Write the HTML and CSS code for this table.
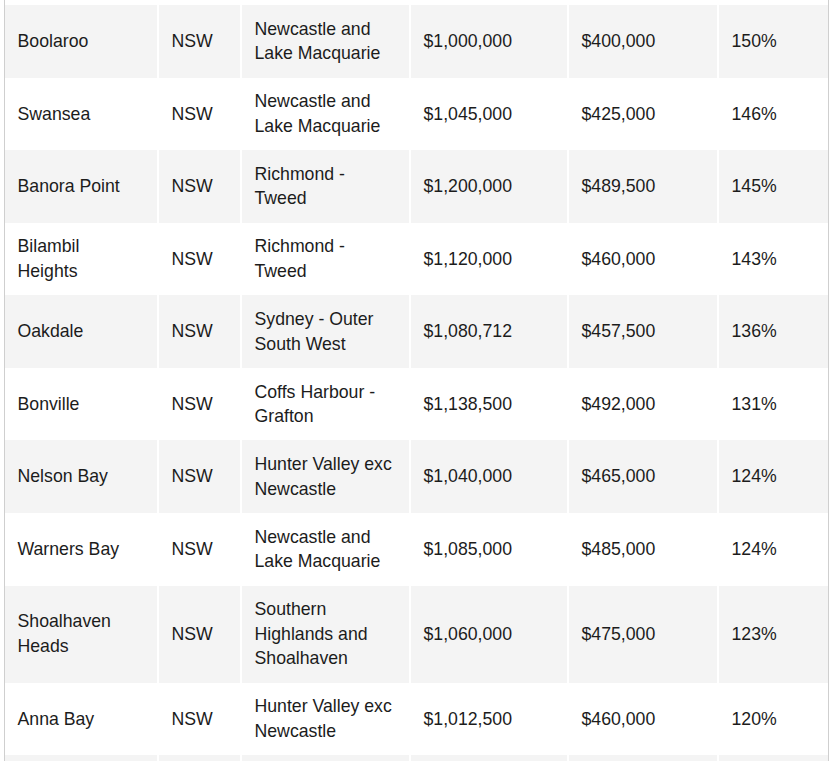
FILE: index.html
```html
<!DOCTYPE html>
<html lang="en">
<head>
<meta charset="utf-8">
<title>Suburbs</title>
<link rel="stylesheet" href="styles.css">
</head>
<body>
<div class="frame">
  <table class="data">
    <colgroup>
      <col class="c-suburb">
      <col class="c-state">
      <col class="c-region">
      <col class="c-price">
      <col class="c-income">
      <col class="c-pct">
    </colgroup>
    <tbody>
      <tr><td>Boolaroo</td><td>NSW</td><td>Newcastle and<br>Lake Macquarie</td><td>$1,000,000</td><td>$400,000</td><td>150%</td></tr>
      <tr><td>Swansea</td><td>NSW</td><td>Newcastle and<br>Lake Macquarie</td><td>$1,045,000</td><td>$425,000</td><td>146%</td></tr>
      <tr><td>Banora Point</td><td>NSW</td><td>Richmond -<br>Tweed</td><td>$1,200,000</td><td>$489,500</td><td>145%</td></tr>
      <tr><td>Bilambil<br>Heights</td><td>NSW</td><td>Richmond -<br>Tweed</td><td>$1,120,000</td><td>$460,000</td><td>143%</td></tr>
      <tr><td>Oakdale</td><td>NSW</td><td>Sydney - Outer<br>South West</td><td>$1,080,712</td><td>$457,500</td><td>136%</td></tr>
      <tr><td>Bonville</td><td>NSW</td><td>Coffs Harbour -<br>Grafton</td><td>$1,138,500</td><td>$492,000</td><td>131%</td></tr>
      <tr><td>Nelson Bay</td><td>NSW</td><td>Hunter Valley exc<br>Newcastle</td><td>$1,040,000</td><td>$465,000</td><td>124%</td></tr>
      <tr><td>Warners Bay</td><td>NSW</td><td>Newcastle and<br>Lake Macquarie</td><td>$1,085,000</td><td>$485,000</td><td>124%</td></tr>
      <tr><td>Shoalhaven<br>Heads</td><td>NSW</td><td>Southern<br>Highlands and<br>Shoalhaven</td><td>$1,060,000</td><td>$475,000</td><td>123%</td></tr>
      <tr><td>Anna Bay</td><td>NSW</td><td>Hunter Valley exc<br>Newcastle</td><td>$1,012,500</td><td>$460,000</td><td>120%</td></tr>
      <tr><td>&nbsp;</td><td>&nbsp;</td><td>&nbsp;<br>&nbsp;</td><td>&nbsp;</td><td>&nbsp;</td><td>&nbsp;</td></tr>
    </tbody>
  </table>
</div>
</body>
</html>
```

FILE: styles.css
```css
html, body {
  margin: 0;
  padding: 0;
  background: #ffffff;
}

body {
  height: 761px;
  overflow: hidden;
}

.frame {
  margin-left: 4px;
  width: 823px;
  border-left: 1px solid #cfcfcf;
  border-right: 1px solid #cfcfcf;
  padding-top: 5px;
  min-height: 800px;
}

.data {
  width: 823px;
  table-layout: fixed;
  border-collapse: separate;
  border-spacing: 0;
  font-family: "Liberation Sans", Arial, sans-serif;
  font-size: 17.7px;
  line-height: 24.6px;
  color: #1c1c1c;
}

.c-suburb { width: 154px; }
.c-state { width: 83px; }
.c-region { width: 169px; }
.c-price { width: 158px; }
.c-income { width: 150px; }
.c-pct { width: 109px; }

.data td {
  padding: 11.7px 8px 11.7px 12.5px;
  vertical-align: middle;
  border-right: 2px solid #ffffff;
  white-space: nowrap;
  overflow: hidden;
}

.data td:last-child {
  border-right: 0;
}

.data tr:nth-child(odd) td {
  background: #f4f4f4;
}

.data tr:nth-child(even) td {
  background: #ffffff;
}
```
